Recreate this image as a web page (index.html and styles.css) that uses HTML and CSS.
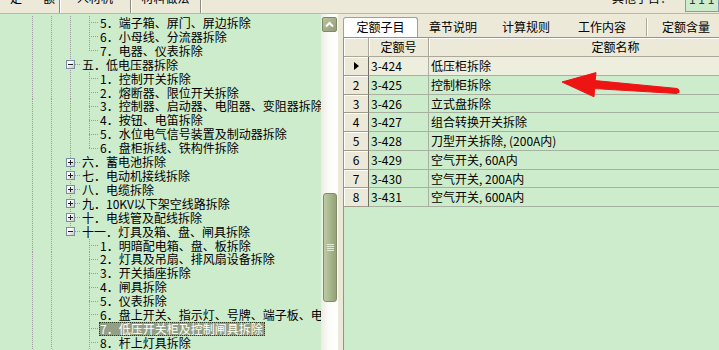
FILE: index.html
```html
<!DOCTYPE html>
<html lang="zh-CN">
<head>
    <meta charset="UTF-8">
    <title>定额子目</title>
    <link rel="stylesheet" href="styles.css">
</head>
<body>
    <div class="topbar">
        <div class="toptabs">
            <span class="toptab first">定额</span>
            <span class="toptab second">人材机</span>
            <span class="toptab">材料做法</span>
        </div>
        <div class="topright">
            <span class="topnote">其他子目：</span>
            <span class="topbox">1 1 1</span>
        </div>
    </div>

    <div class="main">
        <div class="tree-pane">
            <div class="tree">
                <div class="node"><span class="sp"></span><span class="gd"></span><span class="gd"></span><span class="gd"></span><span class="jn"></span><span class="label">5．端子箱、屏门、屏边拆除</span></div>
                <div class="node"><span class="sp"></span><span class="gd"></span><span class="gd"></span><span class="gd"></span><span class="jn"></span><span class="label">6．小母线、分流器拆除</span></div>
                <div class="node"><span class="sp"></span><span class="gd"></span><span class="gd"></span><span class="gd"></span><span class="jn end"></span><span class="label">7．电器、仪表拆除</span></div>
                <div class="node"><span class="sp"></span><span class="gd"></span><span class="gd short"></span><span class="bx"><span class="box"></span><span class="hl"></span></span><span class="label">五．低电压器拆除</span></div>
                <div class="node"><span class="sp"></span><span class="gd"></span><span class="gd"></span><span class="gd"></span><span class="jn"></span><span class="label">1．控制开关拆除</span></div>
                <div class="node"><span class="sp"></span><span class="gd"></span><span class="gd"></span><span class="gd"></span><span class="jn"></span><span class="label">2．熔断器、限位开关拆除</span></div>
                <div class="node"><span class="sp"></span><span class="gd"></span><span class="gd"></span><span class="gd"></span><span class="jn"></span><span class="label">3．控制器、启动器、电阻器、变阻器拆除</span></div>
                <div class="node"><span class="sp"></span><span class="gd"></span><span class="gd"></span><span class="gd"></span><span class="jn"></span><span class="label">4．按钮、电笛拆除</span></div>
                <div class="node"><span class="sp"></span><span class="gd"></span><span class="gd"></span><span class="gd"></span><span class="jn"></span><span class="label">5．水位电气信号装置及制动器拆除</span></div>
                <div class="node"><span class="sp"></span><span class="gd"></span><span class="gd"></span><span class="gd"></span><span class="jn end"></span><span class="label">6．盘柜拆线、铁构件拆除</span></div>
                <div class="node"><span class="sp"></span><span class="gd"></span><span class="gd short"></span><span class="bx"><span class="box plus"></span><span class="hl"></span></span><span class="label">六．蓄电池拆除</span></div>
                <div class="node"><span class="sp"></span><span class="gd"></span><span class="gd short"></span><span class="bx"><span class="box plus"></span><span class="hl"></span></span><span class="label">七．电动机接线拆除</span></div>
                <div class="node"><span class="sp"></span><span class="gd"></span><span class="gd short"></span><span class="bx"><span class="box plus"></span><span class="hl"></span></span><span class="label">八．电缆拆除</span></div>
                <div class="node"><span class="sp"></span><span class="gd"></span><span class="gd short"></span><span class="bx"><span class="box plus"></span><span class="hl"></span></span><span class="label">九．10KV以下架空线路拆除</span></div>
                <div class="node"><span class="sp"></span><span class="gd"></span><span class="gd short"></span><span class="bx"><span class="box plus"></span><span class="hl"></span></span><span class="label">十．电线管及配线拆除</span></div>
                <div class="node"><span class="sp"></span><span class="gd"></span><span class="gd short"></span><span class="bx last"><span class="box"></span><span class="hl"></span></span><span class="label">十一．灯具及箱、盘、闸具拆除</span></div>
                <div class="node"><span class="sp"></span><span class="gd"></span><span class="gd"></span><span class="gb"></span><span class="jn"></span><span class="label">1．明暗配电箱、盘、板拆除</span></div>
                <div class="node"><span class="sp"></span><span class="gd"></span><span class="gd"></span><span class="gb"></span><span class="jn"></span><span class="label">2．灯具及吊扇、排风扇设备拆除</span></div>
                <div class="node"><span class="sp"></span><span class="gd"></span><span class="gd"></span><span class="gb"></span><span class="jn"></span><span class="label">3．开关插座拆除</span></div>
                <div class="node"><span class="sp"></span><span class="gd"></span><span class="gd"></span><span class="gb"></span><span class="jn"></span><span class="label">4．闸具拆除</span></div>
                <div class="node"><span class="sp"></span><span class="gd"></span><span class="gd"></span><span class="gb"></span><span class="jn"></span><span class="label">5．仪表拆除</span></div>
                <div class="node"><span class="sp"></span><span class="gd"></span><span class="gd"></span><span class="gb"></span><span class="jn"></span><span class="label">6．盘上开关、指示灯、号牌、端子板、电阻器拆除</span></div>
                <div class="node"><span class="sp"></span><span class="gd"></span><span class="gd"></span><span class="gb"></span><span class="jn"></span><span class="label sel">7．低压开关柜及控制闸具拆除</span></div>
                <div class="node"><span class="sp"></span><span class="gd"></span><span class="gd"></span><span class="gb"></span><span class="jn"></span><span class="label">8．杆上灯具拆除</span></div>
            </div>
            <div class="vscroll">
                <div class="sb-btn">
                    <svg width="9" height="7" viewBox="0 0 9 7"><polyline points="1,5.5 4.5,2 8,5.5" fill="none" stroke="#fff" stroke-width="2"/></svg>
                </div>
                <div class="sb-thumb"><span class="grip"></span></div>
            </div>
        </div>

        <div class="quota">
            <div class="qtabs">
                <span class="qtab on">定额子目</span>
                <span class="qtab narrow">章节说明</span>
                <span class="qtab">计算规则</span>
                <span class="qtab">工作内容</span>
                <span class="qsep"></span>
                <span class="qtab">定额含量</span>
            </div>
            <div class="grid">
                <div class="grow ghead"><span class="gc gc-ind"></span><span class="gc gc-code">定额号</span><span class="gc gc-name">定额名称</span></div>
                <div class="grow cur"><span class="gc gc-ind"><i class="tri"></i></span><span class="gc gc-code">3-424</span><span class="gc gc-name">低压柜拆除</span></div>
                <div class="grow"><span class="gc gc-ind">2</span><span class="gc gc-code">3-425</span><span class="gc gc-name">控制柜拆除</span></div>
                <div class="grow"><span class="gc gc-ind">3</span><span class="gc gc-code">3-426</span><span class="gc gc-name">立式盘拆除</span></div>
                <div class="grow"><span class="gc gc-ind">4</span><span class="gc gc-code">3-427</span><span class="gc gc-name">组合转换开关拆除</span></div>
                <div class="grow"><span class="gc gc-ind">5</span><span class="gc gc-code">3-428</span><span class="gc gc-name">刀型开关拆除, (200A内)</span></div>
                <div class="grow"><span class="gc gc-ind">6</span><span class="gc gc-code">3-429</span><span class="gc gc-name">空气开关, 60A内</span></div>
                <div class="grow"><span class="gc gc-ind">7</span><span class="gc gc-code">3-430</span><span class="gc gc-name">空气开关, 200A内</span></div>
                <div class="grow"><span class="gc gc-ind">8</span><span class="gc gc-code">3-431</span><span class="gc gc-name">空气开关, 600A内</span></div>
            </div>
        </div>
    </div>

    <!-- annotation arrow drawn over the grid -->
    <svg class="arrow" width="719" height="350" viewBox="0 0 719 350">
        <polygon points="562,82 596,72.6 595.2,80.6 677.2,88.5 676.8,93.5 594.6,88.6 594,96.8" fill="#ee1414" stroke="#ee1414" stroke-width="1" stroke-linejoin="round"/>
        <circle cx="677" cy="91" r="2.5" fill="#ee1414"/>
    </svg>
</body>
</html>
```

FILE: styles.css
```css
:root {
    --green: #cdeccc;
    --face: #ece9d8;
    --dot: #9a9a9a;
}

* {
    box-sizing: border-box;
}

body {
    margin: 0;
    width: 719px;
    height: 350px;
    overflow: hidden;
    position: relative;
    background: var(--face);
    font-family: "Noto Sans CJK SC", "Noto Sans", sans-serif;
    font-size: 12px;
    color: #000;
}

/* top strip, mostly scrolled out of view */
.topbar {
    display: flex;
    justify-content: space-between;
    height: 14px;
    border-bottom: 1px solid #b0bda8;
    overflow: hidden;
}

.toptabs {
    display: flex;
}

.toptab {
    flex: none;
    width: 70px;
    height: 21px;
    margin-top: -8px;
    line-height: 12px;
    text-align: center;
    white-space: nowrap;
    overflow: hidden;
    border-right: 1px solid #8d8c84;
    box-shadow: 1px 0 0 #fff;
}

.toptab.first {
    width: 60px;
    padding-left: 10px;
    text-align: left;
    letter-spacing: 21px;
}

.toptab.second {
    width: 71px;
}

.topright {
    display: flex;
    gap: 13px;
}

.topnote {
    margin-top: -8px;
    line-height: 12px;
    white-space: nowrap;
}

.topbox {
    width: 34px;
    height: 20px;
    margin-top: -8px;
    padding-left: 3px;
    line-height: 12px;
    white-space: nowrap;
    background: var(--green);
    border: 1px solid #7f9db9;
    color: #333;
}

.main {
    display: flex;
    height: 336px;
}

/* chapter tree */
.tree-pane {
    display: flex;
    flex: none;
    width: 338px;
    background: var(--green);
}

.tree {
    width: 321px;
    overflow: hidden;
    padding-top: 2px;
}

.node {
    display: flex;
    height: 13.91px;
    white-space: nowrap;
}

.node > span {
    flex: none;
    height: 100%;
}

.sp {
    width: 32px;
}

.gd,
.gb {
    width: 19px;
}

.gd {
    background: linear-gradient(var(--dot) 50%, transparent 50%) 0 0 / 1px 2px repeat-y;
}

.gd.short {
    width: 10px;
}

.jn {
    width: 10px;
    background:
        linear-gradient(90deg, var(--dot) 50%, transparent 50%) 0 50% / 2px 1px repeat-x,
        linear-gradient(var(--dot) 50%, transparent 50%) 0 0 / 1px 2px repeat-y;
}

.jn.end {
    background:
        linear-gradient(90deg, var(--dot) 50%, transparent 50%) 0 50% / 2px 1px repeat-x,
        linear-gradient(transparent 50%, var(--green) 50%) 0 0 / 100% 100% no-repeat,
        linear-gradient(var(--dot) 50%, transparent 50%) 0 0 / 1px 2px repeat-y;
}

.bx {
    width: 20px;
    display: flex;
    align-items: center;
    background: linear-gradient(var(--dot) 50%, transparent 50%) 9px 0 / 1px 2px repeat-y;
}

.bx.last {
    background:
        linear-gradient(transparent 50%, var(--green) 50%) 0 0 / 100% 100% no-repeat,
        linear-gradient(var(--dot) 50%, transparent 50%) 9px 0 / 1px 2px repeat-y;
}

.box {
    flex: none;
    width: 9px;
    height: 9px;
    margin-left: 5px;
    border: 1px solid #7b8ea5;
    background:
        linear-gradient(#1f1f1f, #1f1f1f) center / 5px 1px no-repeat,
        linear-gradient(135deg, #ffffff 30%, #c9c9bf);
}

.box.plus {
    background:
        linear-gradient(#1f1f1f, #1f1f1f) center / 5px 1px no-repeat,
        linear-gradient(#1f1f1f, #1f1f1f) center / 1px 5px no-repeat,
        linear-gradient(135deg, #ffffff 30%, #c9c9bf);
}

.hl {
    flex: none;
    width: 5px;
    height: 1px;
    background: linear-gradient(90deg, var(--dot) 50%, transparent 50%) 0 0 / 2px 1px repeat-x;
}

.label {
    padding: 0 2px 0 1px;
    line-height: 13.91px;
}

.label.sel {
    background: #939f84;
    color: #fff;
    outline: 1px dotted #2f3a25;
    outline-offset: -1px;
}

/* scrollbar */
.vscroll {
    flex: none;
    width: 17px;
    padding: 3px 1px 0 1px;
    display: flex;
    flex-direction: column;
    background: linear-gradient(90deg, #ecebe3, #fbfbf8 45%, #ffffff);
}

.sb-btn {
    width: 15px;
    height: 15px;
    border: 1px solid #7d8a66;
    border-radius: 2px;
    background: linear-gradient(135deg, #b9c3a0, #929e77);
    display: flex;
    align-items: center;
    justify-content: center;
}

.sb-thumb {
    width: 14px;
    height: 109px;
    margin: 161px 0 0 1px;
    border: 1px solid #7f8e69;
    border-radius: 3px;
    background: linear-gradient(90deg, #bccaa3, #a8b88c 50%, #93a279);
    display: flex;
    align-items: center;
    justify-content: center;
}

.grip {
    width: 7px;
    height: 7px;
    background: repeating-linear-gradient(#e4ead8 0 1px, transparent 1px 2px);
}

/* quota list */
.quota {
    flex: 1;
    min-width: 0;
    margin-left: 5px;
    display: flex;
    flex-direction: column;
    overflow: hidden;
}

.qtabs {
    display: flex;
    flex: none;
    height: 23px;
    padding-top: 3px;
}

.qtab {
    flex: none;
    width: 76px;
    height: 20px;
    line-height: 20px;
    text-align: center;
    white-space: nowrap;
}

.qtab.on {
    width: 75px;
    line-height: 18px;
    background: #fff;
    border: 1px solid #98a0a8;
    border-bottom: 0;
    border-radius: 3px 3px 0 0;
}

.qtab.narrow {
    width: 70px;
}

.qsep {
    flex: none;
    width: 2px;
    height: 18px;
    margin: 1px 0 0 6px;
    border-left: 1px solid #aca899;
    border-right: 1px solid #fff;
}

.grid {
    flex: 1;
    background: var(--green);
    border-top: 1px solid #8d949c;
    border-left: 1px solid #8d949c;
}

.grow {
    display: flex;
    height: 18.75px;
}

.grow.ghead {
    height: 19px;
}

.gc {
    flex: none;
    height: 100%;
    padding-left: 2px;
    line-height: 17.75px;
    white-space: nowrap;
    overflow: hidden;
    border-right: 1px solid #a7b1a1;
    border-bottom: 1px solid #a7b1a1;
}

.gc-ind {
    width: 25px;
    padding: 0;
    display: flex;
    align-items: center;
    justify-content: center;
    background: var(--face);
    border-right-color: #716f64;
    border-bottom-color: #a09d8c;
    box-shadow: inset 1px 1px 0 #fff;
}

.gc-code {
    width: 60px;
}

.gc-name {
    width: 374px;
}

.ghead .gc {
    padding: 0;
    line-height: 18px;
    text-align: center;
    background: var(--face);
    border-right-color: #aca899;
    border-bottom-color: #aca899;
    box-shadow: inset 1px 1px 0 #fff;
}

.cur .gc-code,
.cur .gc-name {
    background: #eeeedf;
}

.tri {
    width: 0;
    height: 0;
    border-left: 5px solid #000;
    border-top: 4px solid transparent;
    border-bottom: 4px solid transparent;
}

.arrow {
    position: absolute;
    left: 0;
    top: 0;
    pointer-events: none;
}
```
